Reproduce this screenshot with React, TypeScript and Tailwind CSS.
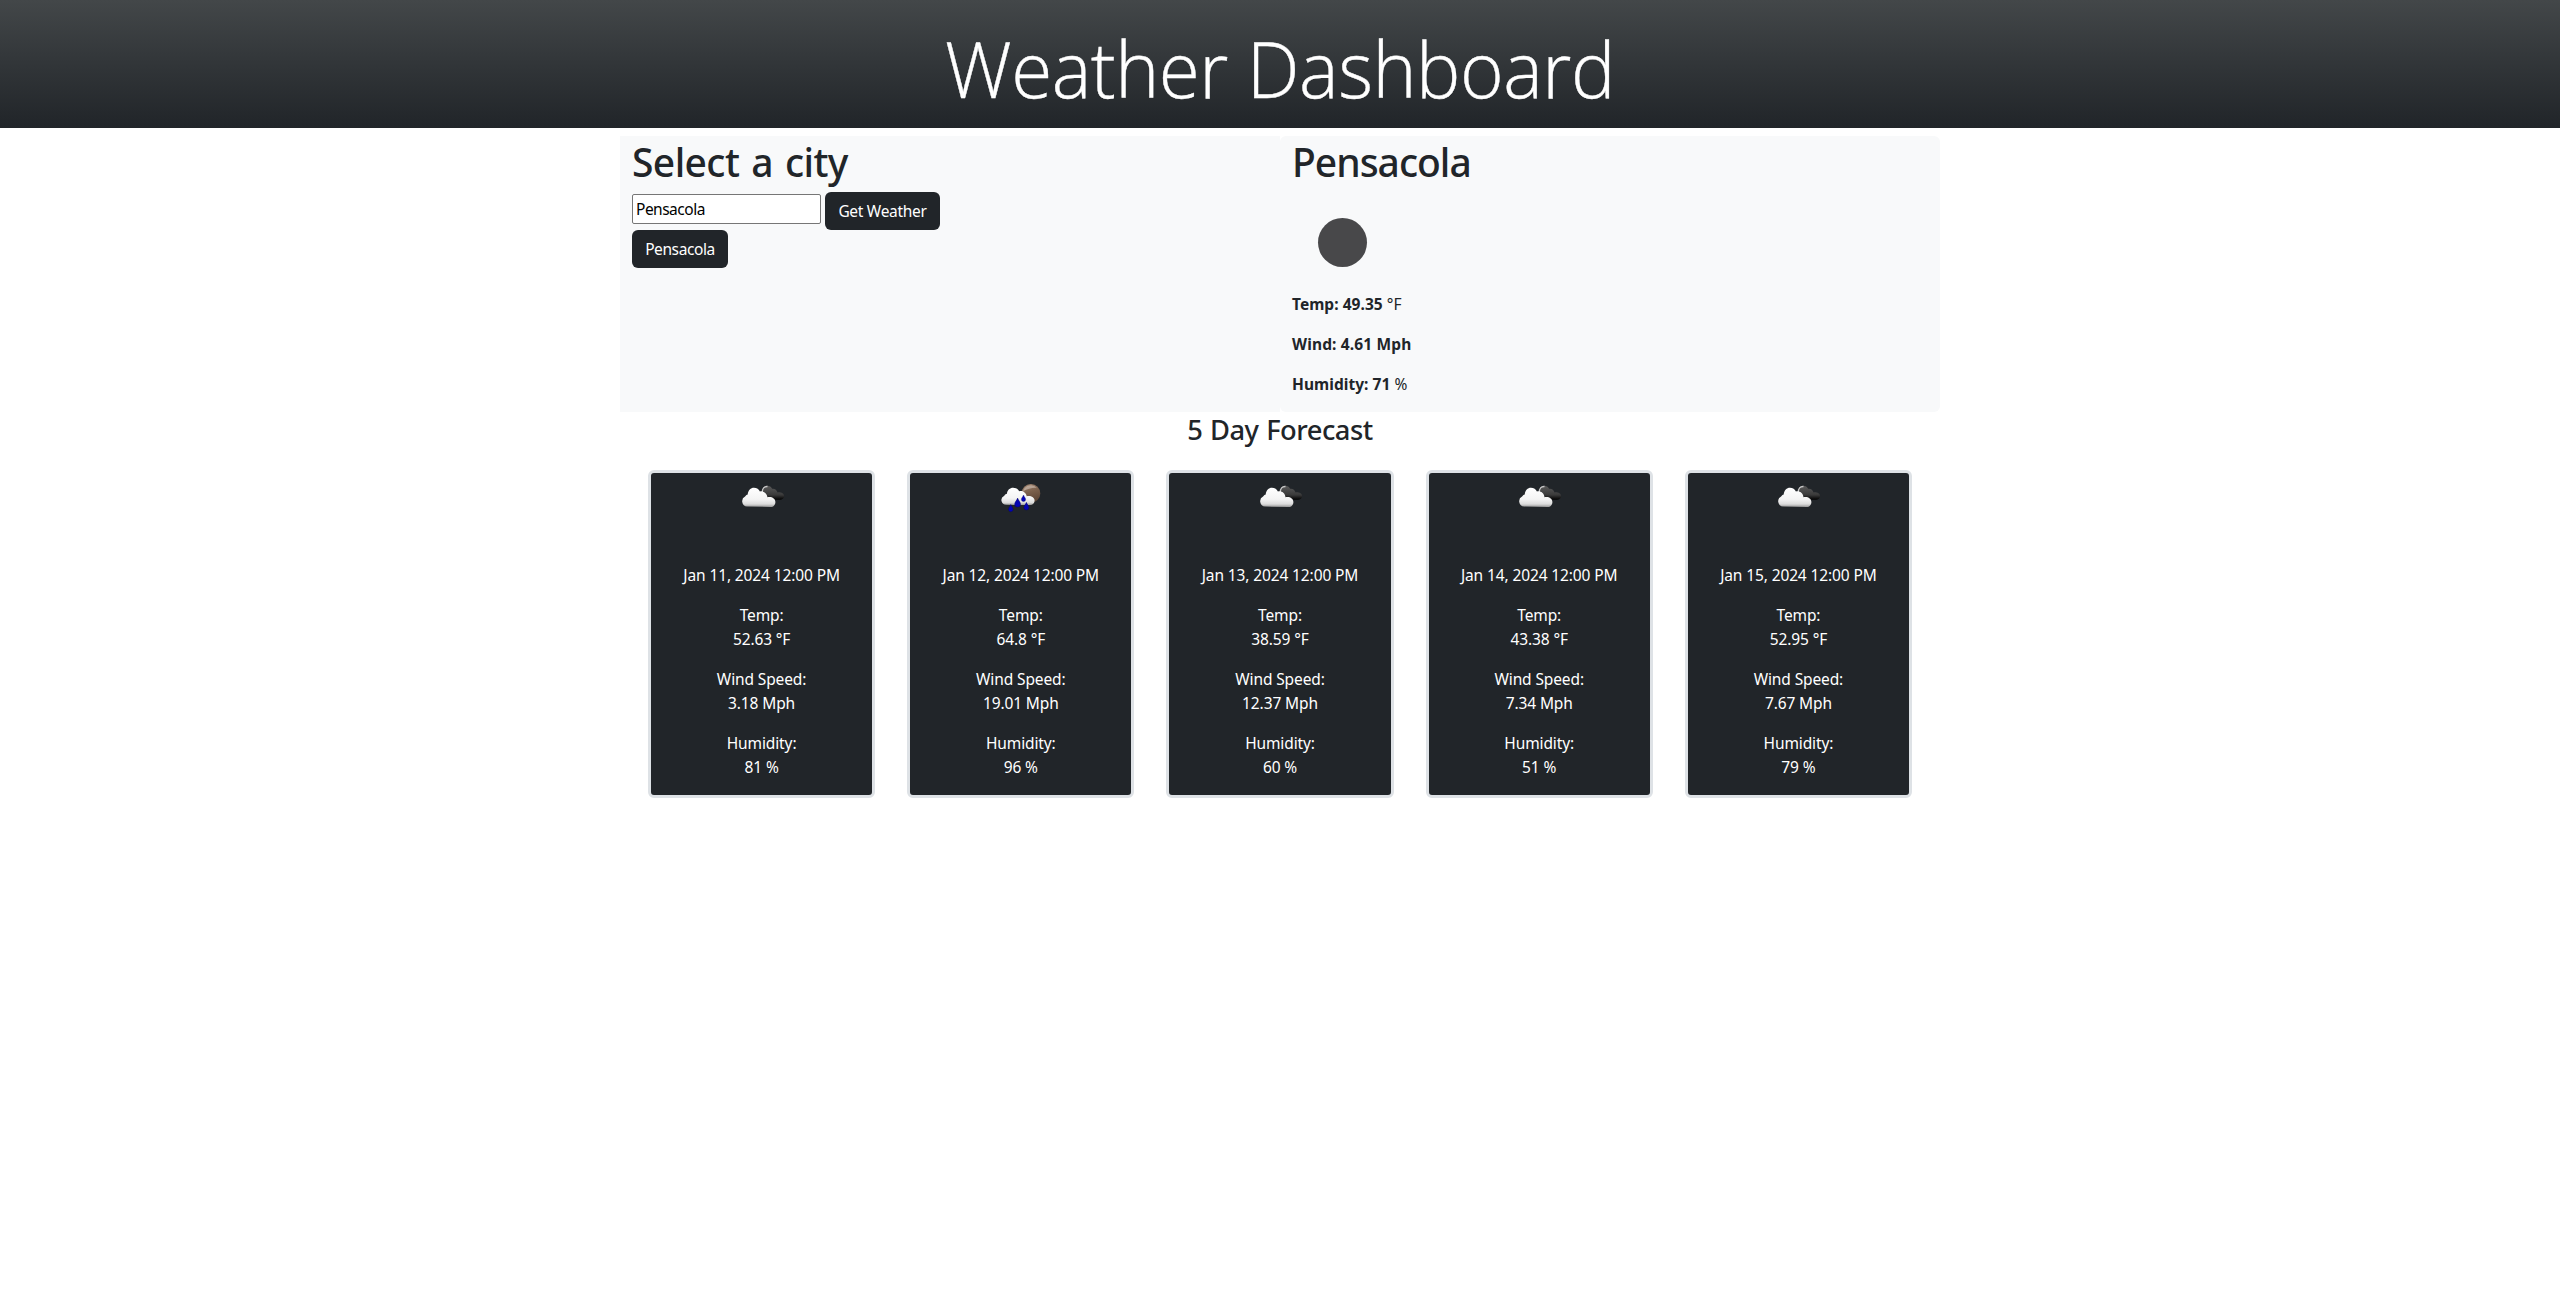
import type { ReactNode } from "react";

type Day = { date: string; icon: "clouds" | "rain"; temp: string; wind: string; humidity: string };

const days: Day[] = [
  { date: "Jan 11, 2024 12:00 PM", icon: "clouds", temp: "52.63", wind: "3.18", humidity: "81" },
  { date: "Jan 12, 2024 12:00 PM", icon: "rain", temp: "64.8", wind: "19.01", humidity: "96" },
  { date: "Jan 13, 2024 12:00 PM", icon: "clouds", temp: "38.59", wind: "12.37", humidity: "60" },
  { date: "Jan 14, 2024 12:00 PM", icon: "clouds", temp: "43.38", wind: "7.34", humidity: "51" },
  { date: "Jan 15, 2024 12:00 PM", icon: "clouds", temp: "52.95", wind: "7.67", humidity: "79" },
];

const cloudPath =
  "M10.5 34 A5.3 5.3 0 0 1 8.6 24 C9.5 22.3 10.4 22 11.2 21.8 C11.5 17.6 14.3 15.1 17.4 15.1 C20.3 15.1 22.5 16.6 23.4 19 C26.6 18 30.4 20.2 31 24.6 C35 23.6 38.9 25.9 38.9 29.3 C38.9 32.2 37 34.3 34.4 34.3 Z";

function Gradients() {
  return (
    <defs>
      <linearGradient id="white-cloud" x1="0" y1="0" x2="0" y2="1">
        <stop offset="0" stopColor="#ffffff" />
        <stop offset="0.6" stopColor="#f4f4f4" />
        <stop offset="0.85" stopColor="#dcdcdc" />
        <stop offset="1" stopColor="#9a9a9a" />
      </linearGradient>
      <linearGradient id="dark-cloud" x1="0" y1="0" x2="0" y2="1">
        <stop offset="0" stopColor="#5a5a5a" />
        <stop offset="0.65" stopColor="#3a3a3a" />
        <stop offset="1" stopColor="#000000" />
      </linearGradient>
      <linearGradient id="moon" x1="0" y1="0" x2="0.3" y2="1">
        <stop offset="0" stopColor="#a58a76" />
        <stop offset="0.5" stopColor="#7b604c" />
        <stop offset="1" stopColor="#5e4636" />
      </linearGradient>
    </defs>
  );
}

function CloudsIcon() {
  return (
    <svg className="size-[50px]" viewBox="0.5 0.4 50 50">
      <Gradients />
      <path
        d="M25.6 22 C24.8 16.4 27.4 13.2 30.5 13.2 C33 13.2 34.8 14.4 35.6 16.2 C38.3 15.8 40.3 17.3 41 19.8 C44.5 19.4 47.6 21 47.6 23.6 C47.6 25.8 45.6 27.2 43.4 27.2 L30 27.2 Z"
        fill="url(#dark-cloud)"
      />
      <path d="M25.8 20 C25.6 15.8 27.8 13.7 31 13.9" fill="none" stroke="#c8c8c8" strokeWidth="1.3" />
      <path d={cloudPath} fill="url(#white-cloud)" />
    </svg>
  );
}

function RainIcon() {
  const drop = "M0 -4.4 C0.6 -2.2 2.9 -0.4 2.9 1.7 A2.9 2.9 0 0 1 -2.9 1.7 C-2.9 -0.4 -0.6 -2.2 0 -4.4 Z";
  return (
    <svg className="size-[50px]" viewBox="0 0.2 50 50">
      <circle cx="34.9" cy="20.6" r="9.4" fill="url(#moon)" />
      <path d="M27 18.5 A8.3 8.3 0 0 1 41 15.2 C37 14.6 32 16 27 18.5 Z" fill="#d9cbc0" opacity="0.55" />
      <path d={cloudPath} transform="translate(-.3 1.1) scale(1 .91)" fill="url(#white-cloud)" />
      <g fill="#0404b4" stroke="#04046a" strokeWidth="0.5">
        <path d={drop} transform="translate(21.6 29.7)" />
        <path d={drop} transform="translate(14.8 35.2) scale(.8)" />
        <path d={drop} transform="translate(27.5 25.4) scale(.72)" />
        <path d={drop} transform="translate(30.4 33.3) scale(.85)" />
      </g>
    </svg>
  );
}

function DarkButton({ className, children }: { className: string; children: ReactNode }) {
  return (
    <button className={`h-[38px] whitespace-nowrap rounded-md bg-[#212529] text-center leading-6 text-white ${className}`}>
      {children}
    </button>
  );
}

function ForecastCard({ day }: { day: Day }) {
  return (
    <div className="mx-4 rounded-md border-3 border-[#dee2e6] bg-[#212529] pb-4 text-center leading-6 text-white">
      <div className="mb-10 flex h-[50px] justify-center">{day.icon === "rain" ? <RainIcon /> : <CloudsIcon />}</div>
      <p className="mb-4">{day.date}</p>
      <p className="mb-4">
        Temp:
        <br />
        {day.temp} °F
      </p>
      <p className="mb-4">
        Wind Speed:
        <br />
        {day.wind} Mph
      </p>
      <p>
        Humidity:
        <br />
        {day.humidity} %
      </p>
    </div>
  );
}

export default function App() {
  return (
    <div className="min-h-[1289px] bg-white font-['Noto_Sans',sans-serif] text-[15.5px] leading-6 tracking-[-0.12px] text-[#212529]">
      <header className="flex h-32 justify-center bg-linear-to-b from-[#434749] to-[#212529] pt-5">
        <h1 className="origin-center scale-x-[0.957] whitespace-nowrap font-['Open_Sans',sans-serif] text-[78px] font-light leading-[96px] tracking-[-0.5px] text-white [-webkit-text-stroke:0.4px_white]">
          Weather Dashboard
        </h1>
      </header>

      <main className="mx-auto w-[1320px] pt-2">
        <div className="grid h-[276px] grid-cols-2">
          <section className="bg-[#f8f9fa] px-3">
            <h2 className="mb-1.5 pt-0.5 text-[39px] font-medium leading-[48px] tracking-[-0.6px] [word-spacing:2.5px]">Select a city</h2>
            <div className="flex gap-1">
              <input
                className="mt-0.5 h-[30px] w-[189px] rounded-[2px] border border-[#767676] bg-white px-[3px] text-black tracking-[-0.5px] outline-none"
                defaultValue="Pensacola"
              />
              <DarkButton className="w-[115px] tracking-[-0.3px]">Get Weather</DarkButton>
            </div>
            <DarkButton className="w-24 tracking-[-0.4px]">Pensacola</DarkButton>
          </section>

          <section className="rounded-md bg-[#f8f9fa] px-3">
            <h2 className="mb-1.5 pt-0.5 text-[39px] font-medium leading-[48px] tracking-[-1px]">Pensacola</h2>
            <svg className="block size-[100px]" viewBox="0 0 100 100">
              <circle cx="50.5" cy="50.5" r="24.5" fill="#48484a" />
            </svg>
            <p className="mb-4 tracking-[0.05px]">
              <b>Temp: 49.35</b> °F
            </p>
            <p className="mb-4 tracking-[0.15px]">
              <b>Wind: 4.61 Mph</b>
            </p>
            <p className="tracking-[0.05px]">
              <b>Humidity: 71</b> %
            </p>
          </section>
        </div>

        <h3 className="mb-[23.6px] pt-px text-center text-[27.3px] font-medium leading-[33px] tracking-[-0.5px] [word-spacing:1px]">5 Day Forecast</h3>
        <div className="grid grid-cols-5 px-3">
          {days.map((day) => (
            <ForecastCard key={day.date} day={day} />
          ))}
        </div>
      </main>
    </div>
  );
}
